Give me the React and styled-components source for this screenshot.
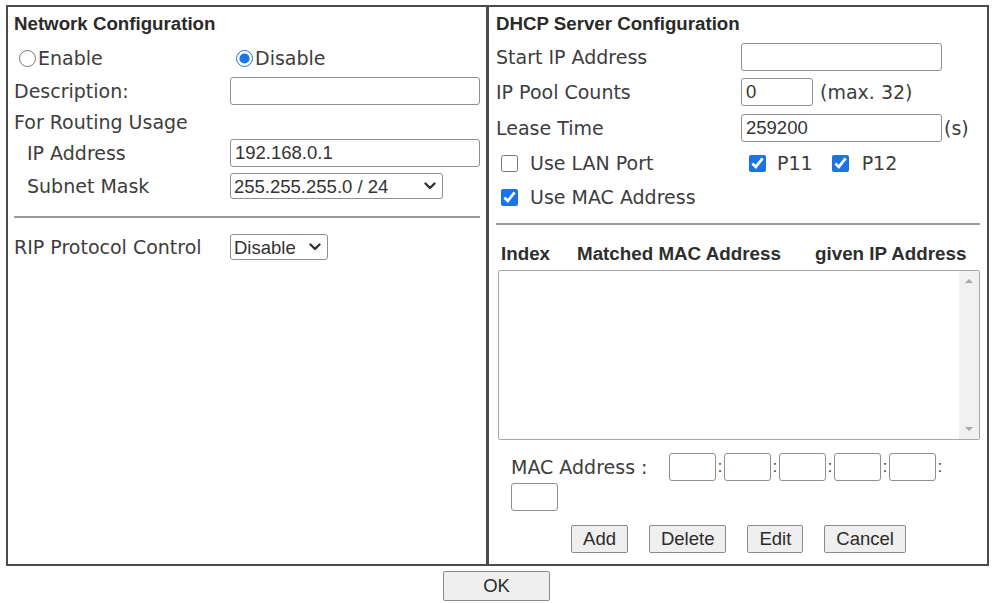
import React from "react";
import styled, { createGlobalStyle } from "styled-components";

const GlobalStyle = createGlobalStyle`
  html, body {
    margin: 0;
    padding: 0;
    background: #ffffff;
  }
  body {
    font-family: "DejaVu Sans", Verdana, sans-serif;
    color: #3d3d3d;
  }
`;

const macParts = ["", "", "", "", "", ""];

const Chevron = () => (
  <svg width="12" height="8" viewBox="0 0 12 8">
    <path d="M1.5 1.5 L6 6 L10.5 1.5" fill="none" stroke="#333" strokeWidth="2.4" strokeLinecap="round" strokeLinejoin="round" />
  </svg>
);

const Dropdown = ({ width, children }) => (
  <SelectWrap width={width}>
    <Select>{children}</Select>
    <Caret>
      <Chevron />
    </Caret>
  </SelectWrap>
);

const App = () => {
  return (
    <Page>
      <GlobalStyle />
      <Frame>
        <Panel divided>
          <Title>Network Configuration</Title>
          <Row h={36} cols="216px 1fr">
            <Choice indent={5} gap={2}>
              <Check type="radio" name="net" />
              Enable
            </Choice>
            <Choice indent={6} gap={2}>
              <Check type="radio" name="net" defaultChecked />
              Disable
            </Choice>
          </Row>
          <Row h={30} cols="216px 250px">
            <Label>Description:</Label>
            <TextBox />
          </Row>
          <Row h={32}>
            <Label>For Routing Usage</Label>
          </Row>
          <Row h={30} cols="216px 250px">
            <Label indent={13}>IP Address</Label>
            <TextBox defaultValue="192.168.0.1" />
          </Row>
          <Row h={36} cols="216px auto">
            <Label indent={13}>Subnet Mask</Label>
            <Dropdown width={213}>
              <option>255.255.255.0 / 24</option>
            </Dropdown>
          </Row>
          <Rule />
          <Row h={36} cols="216px auto">
            <Label>RIP Protocol Control</Label>
            <Dropdown width={98}>
              <option>Disable</option>
            </Dropdown>
          </Row>
        </Panel>

        <Panel>
          <Title>DHCP Server Configuration</Title>
          <Row h={34} cols="245px 201px">
            <Label>Start IP Address</Label>
            <TextBox />
          </Row>
          <Row h={36} cols="245px 72px auto">
            <Label>IP Pool Counts</Label>
            <TextBox defaultValue="0" />
            <Note>(max. 32)</Note>
          </Row>
          <Row h={36} cols="245px 201px auto">
            <Label>Lease Time</Label>
            <TextBox defaultValue="259200" />
            <Note tight>(s)</Note>
          </Row>
          <Row h={34} cols="245px auto auto">
            <Choice indent={5}>
              <Check type="checkbox" />
              Use LAN Port
            </Choice>
            <Choice indent={8} gap={11}>
              <Check type="checkbox" defaultChecked />
              P11
            </Choice>
            <Choice indent={19} gap={13}>
              <Check type="checkbox" defaultChecked />
              P12
            </Choice>
          </Row>
          <Row h={34}>
            <Choice indent={5}>
              <Check type="checkbox" defaultChecked />
              Use MAC Address
            </Choice>
          </Row>
          <Rule wide />
          <TableHead>
            <span>Index</span>
            <span>Matched MAC Address</span>
            <span>given IP Address</span>
          </TableHead>
          <ListBox>
            <ListArea />
            <ScrollTrack>
              <Arrow up />
              <Arrow />
            </ScrollTrack>
          </ListBox>
          <MacRow>
            <MacLabel>MAC Address :</MacLabel>
            {macParts.map((part, index) => (
              <MacPart key={index}>
                <MacBox defaultValue={part} />
                {index < 5 && <Colon>:</Colon>}
              </MacPart>
            ))}
          </MacRow>
          <ButtonBar>
            <Button>Add</Button>
            <Button>Delete</Button>
            <Button>Edit</Button>
            <Button>Cancel</Button>
          </ButtonBar>
        </Panel>
      </Frame>
      <Footer>
        <Button wide>OK</Button>
      </Footer>
    </Page>
  );
};

export default App;

const Page = styled.div`
  width: 993px;
  height: 603px;
  padding-top: 5px;
  box-sizing: border-box;
  overflow: hidden;
`;

const Frame = styled.div`
  display: grid;
  grid-template-columns: 481px 1fr;
  width: 983px;
  height: 561px;
  margin-left: 6px;
  box-sizing: border-box;
  border: 2px solid #4b4b4b;
`;

const Panel = styled.div`
  display: flex;
  flex-direction: column;
  padding: 1px 6px 0 ${(props) => (props.divided ? 6 : 7)}px;
  border-right: ${(props) => (props.divided ? "3px solid #4b4b4b" : "none")};
  min-width: 0;
`;

const Title = styled.div`
  height: 32px;
  line-height: 32px;
  font-family: "Liberation Sans", Arial, sans-serif;
  font-weight: bold;
  font-size: 18.7px;
  color: #2a2a2a;
`;

const Row = styled.div`
  display: grid;
  grid-template-columns: ${(props) => props.cols || "1fr"};
  justify-content: start;
  align-items: center;
  height: ${(props) => props.h}px;
`;

const Label = styled.span`
  font-size: 19px;
  padding-left: ${(props) => props.indent || 0}px;
  white-space: nowrap;
`;

const Note = styled.span`
  font-size: 19px;
  padding-left: ${(props) => (props.tight ? 2 : 7)}px;
  white-space: nowrap;
`;

const Choice = styled.label`
  display: flex;
  align-items: center;
  gap: ${(props) => (props.gap !== undefined ? props.gap : 12)}px;
  padding-left: ${(props) => props.indent || 0}px;
  font-size: 19px;
  white-space: nowrap;
`;

const Check = styled.input`
  width: 17px;
  height: 17px;
  margin: 0;
  accent-color: #1a73e8;
`;

const TextBox = styled.input`
  box-sizing: border-box;
  width: 100%;
  height: 28px;
  padding: 0 4px;
  border: 1px solid #8f8f8f;
  border-radius: 3px;
  font-family: "Liberation Sans", Arial, sans-serif;
  font-size: 18.5px;
  color: #333333;
  background: #ffffff;
  outline: none;
`;

const SelectWrap = styled.div`
  position: relative;
  width: ${(props) => props.width}px;
  height: 26px;
`;

const Select = styled.select`
  appearance: none;
  box-sizing: border-box;
  width: 100%;
  height: 100%;
  padding: 0 0 0 3px;
  border: 1px solid #8f8f8f;
  border-radius: 3px;
  font-family: "Liberation Sans", Arial, sans-serif;
  font-size: 18.5px;
  color: #333333;
  background: #ffffff;
`;

const Caret = styled.span`
  position: absolute;
  right: 7px;
  top: 9px;
  display: flex;
  pointer-events: none;
`;

const Rule = styled.hr`
  width: ${(props) => (props.wide ? "484px" : "466px")};
  margin: ${(props) => (props.wide ? "9px 0 15px 0" : "12px 0 11px 0")};
  border: none;
  border-top: 2px solid #9a9a9a;
`;

const TableHead = styled.div`
  display: grid;
  grid-template-columns: 76px 238px auto;
  align-items: center;
  height: 28px;
  padding-left: 5px;
  font-family: "Liberation Sans", Arial, sans-serif;
  font-weight: bold;
  font-size: 18.8px;
  color: #2e2e2e;
  white-space: nowrap;
`;

const ListBox = styled.div`
  display: flex;
  width: 482px;
  height: 170px;
  margin: 2px 0 0 2px;
  box-sizing: border-box;
  border: 1px solid #a7a7a7;
  border-radius: 2px;
`;

const ListArea = styled.div`
  flex: 1;
`;

const ScrollTrack = styled.div`
  display: flex;
  flex-direction: column;
  justify-content: space-between;
  align-items: center;
  width: 20px;
  padding: 8px 0;
  box-sizing: border-box;
  background: #f1f1f1;
`;

const Arrow = styled.div`
  width: 0;
  height: 0;
  border-left: 4px solid transparent;
  border-right: 4px solid transparent;
  border-top: ${(props) => (props.up ? "none" : "4px solid #a8a8a8")};
  border-bottom: ${(props) => (props.up ? "4px solid #a8a8a8" : "none")};
`;

const MacRow = styled.div`
  display: flex;
  flex-wrap: wrap;
  align-items: center;
  row-gap: 2px;
  width: 450px;
  margin-top: 13px;
  padding-left: 15px;
`;

const MacLabel = styled.span`
  width: 158px;
  font-size: 19px;
  white-space: nowrap;
`;

const MacPart = styled.span`
  display: flex;
  align-items: center;
`;

const MacBox = styled.input`
  box-sizing: border-box;
  width: 47px;
  height: 28px;
  border: 1px solid #8f8f8f;
  border-radius: 3px;
  background: #ffffff;
  outline: none;
`;

const Colon = styled.span`
  width: 8px;
  text-align: center;
  font-family: "Liberation Sans", Arial, sans-serif;
  font-size: 16px;
`;

const ButtonBar = styled.div`
  display: flex;
  justify-content: center;
  gap: 21px;
  margin-top: 14px;
`;

const Button = styled.button`
  box-sizing: border-box;
  height: ${(props) => (props.wide ? "30px" : "28px")};
  min-width: ${(props) => (props.wide ? "107px" : "auto")};
  padding: 0 11px;
  border: 1px solid #8a8a8a;
  border-radius: 2px;
  background: #efefef;
  font-family: "Liberation Sans", Arial, sans-serif;
  font-size: 18.5px;
  color: #2b2b2b;
`;

const Footer = styled.div`
  display: flex;
  justify-content: center;
  padding-top: 5px;
`;
